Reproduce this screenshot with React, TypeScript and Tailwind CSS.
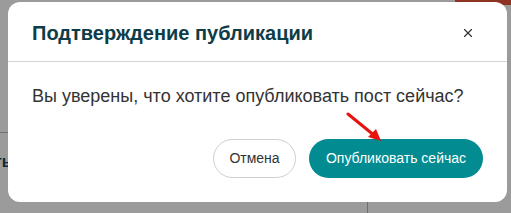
import { X } from 'lucide-react';

export default function App() {
  return (
    <div
      className="relative w-[511px] h-[213px] overflow-hidden bg-[#9b9b9b]"
      style={{ fontFamily: '"Liberation Sans", Arial, sans-serif' }}
    >
      {/* Page behind the overlay */}
      <div className="absolute left-[455px] top-0 w-[60px] h-[5px] bg-[#8c3323]" />
      <div className="absolute left-0 top-[132px] w-[8px] h-px bg-[#6f6f6f]" />
      <div className="absolute left-[-6px] top-[150px] text-[16px] font-bold text-[#0b2a33]">ть</div>
      <div className="absolute left-[367px] top-[200px] w-px h-[13px] bg-[#6f6f6f]" />

      {/* Modal */}
      <div className="absolute left-[8px] top-[2px] w-[499px] h-[200px] rounded-[12px] bg-white flex flex-col">
        <div className="flex items-center justify-between h-[60px] px-6 pt-[2px] border-b border-[#d4d4d4]">
          <h2 className="text-[20px] font-bold text-[#0e3c47]">Подтверждение публикации</h2>
          <button className="w-[20px] h-[20px] flex items-center justify-center text-[#333] mr-[5px]">
            <X size={14} strokeWidth={2} />
          </button>
        </div>
        <div className="px-6 pt-[21px] text-[18px] leading-[26px] text-[#333]">
          Вы уверены, что хотите опубликовать пост сейчас?
        </div>
        <div className="relative flex justify-end gap-[13px] px-6 mt-auto pb-6">
          <button className="h-[39px] w-[83px] rounded-full border border-[#cfcfcf] bg-white text-[14px] text-[#333]">
            Отмена
          </button>
          <button className="h-[39px] w-[174px] rounded-full bg-[#038b92] text-[14px] text-white">
            Опубликовать сейчас
          </button>
          <svg className="absolute left-[336px] top-[-27px]" width="40" height="36" viewBox="0 0 40 36">
            <line x1="4" y1="2" x2="31" y2="24" stroke="#e8120f" strokeWidth="3" strokeLinecap="round" />
            <polygon points="37,29 24,25 32,17" fill="#e8120f" />
          </svg>
        </div>
      </div>
    </div>
  );
}
